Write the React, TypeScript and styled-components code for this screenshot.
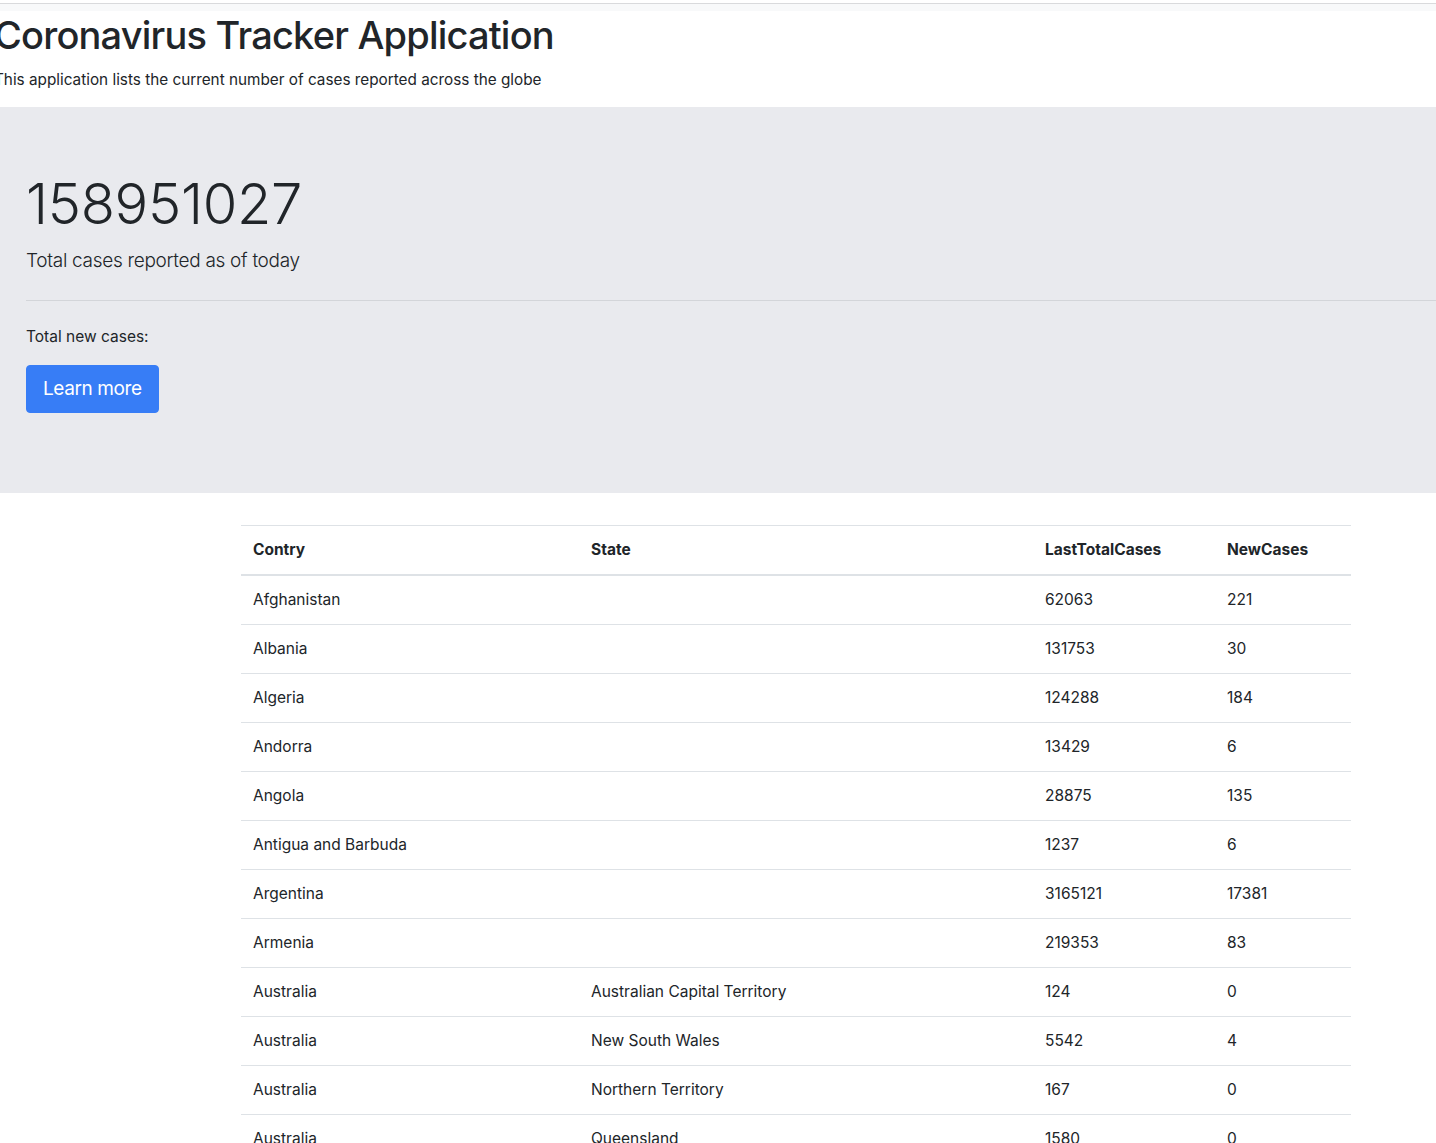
import React from 'react';
import styled, { createGlobalStyle } from 'styled-components';

const GlobalStyle = createGlobalStyle`
    html, body {
        margin: 0;
        padding: 0;
        background: #fff;
        overflow: hidden;
    }
    body {
        font-family: Inter, "Noto Sans", "Liberation Sans", sans-serif;
        font-size: 16px;
        line-height: 24px;
        color: #212529;
    }
`;

const TopStrip = styled.div`
    margin-top: 3px;
    height: 7px;
    border-top: 1px solid #d9dadc;
    background-color: #f8f9fa;
`;

const Header = styled.header`
    margin-left: -6px;
`;

const Title = styled.h1`
    margin: 0 0 8px;
    font-size: 38px;
    font-weight: 500;
    line-height: 49px;
    letter-spacing: -0.8px;
`;

const Subtitle = styled.p`
    margin: 0 0 15px;
    font-size: 15.3px;
    line-height: 24px;
`;

const Jumbotron = styled.section`
    background-color: #e9eaee;
    padding: 64px 0 64px 26px;
`;

const Display = styled.h2`
    margin: 0 0 8px;
    font-size: 56px;
    font-weight: 300;
    line-height: 67px;
    letter-spacing: -0.3px;
`;

const Lead = styled.p`
    margin: 0 0 16px;
    font-size: 19px;
    font-weight: 300;
    line-height: 30px;
    letter-spacing: -0.3px;
`;

const Divider = styled.hr`
    margin: 24px 0;
    border: 0;
    border-top: 1px solid #d3d5d9;
`;

const Text = styled.p`
    margin: 0 0 16px;
    font-size: 15.5px;
    line-height: 24px;
`;

const PrimaryButton = styled.a`
    display: inline-block;
    padding: 8px 16px;
    font-size: 19px;
    line-height: 30px;
    letter-spacing: -0.4px;
    color: #fff;
    background-color: #377df6;
    border: 1px solid #377df6;
    border-radius: 4px;
    text-decoration: none;
    cursor: pointer;
`;

const TableWrap = styled.div`
    padding: 32px 0 0 241px;
`;

const CasesTable = styled.table`
    width: 1110px;
    table-layout: fixed;
    border-collapse: collapse;
    font-size: 15.5px;
    line-height: 24px;
`;

const HeadCell = styled.th<{ $w: number }>`
    box-sizing: border-box;
    width: ${(p) => p.$w}px;
    padding: 12px;
    text-align: left;
    font-weight: 700;
    vertical-align: bottom;
    border-top: 1px solid #dee2e6;
    border-bottom: 2px solid #dee2e6;
`;

const Cell = styled.td`
    padding: 12px;
    border-top: 1px solid #dee2e6;
    vertical-align: top;
`;

type Row = { country: string; state: string; total: number; newCases: number };

const rows: Row[] = [
    { country: 'Afghanistan', state: '', total: 62063, newCases: 221 },
    { country: 'Albania', state: '', total: 131753, newCases: 30 },
    { country: 'Algeria', state: '', total: 124288, newCases: 184 },
    { country: 'Andorra', state: '', total: 13429, newCases: 6 },
    { country: 'Angola', state: '', total: 28875, newCases: 135 },
    { country: 'Antigua and Barbuda', state: '', total: 1237, newCases: 6 },
    { country: 'Argentina', state: '', total: 3165121, newCases: 17381 },
    { country: 'Armenia', state: '', total: 219353, newCases: 83 },
    { country: 'Australia', state: 'Australian Capital Territory', total: 124, newCases: 0 },
    { country: 'Australia', state: 'New South Wales', total: 5542, newCases: 4 },
    { country: 'Australia', state: 'Northern Territory', total: 167, newCases: 0 },
    { country: 'Australia', state: 'Queensland', total: 1580, newCases: 0 },
    { country: 'Australia', state: 'South Australia', total: 744, newCases: 1 },
    { country: 'Australia', state: 'Tasmania', total: 234, newCases: 0 },
];

const App: React.FC = () => {
    return (
        <>
            <GlobalStyle />
            <TopStrip />
            <Header>
                <Title>Coronavirus Tracker Application</Title>
                <Subtitle>This application lists the current number of cases reported across the globe</Subtitle>
            </Header>

            <Jumbotron>
                <Display>158951027</Display>
                <Lead>Total cases reported as of today</Lead>
                <Divider />
                <Text>Total new cases:</Text>
                <Text>
                    <PrimaryButton role="button">Learn more</PrimaryButton>
                </Text>
            </Jumbotron>

            <TableWrap>
                <CasesTable>
                    <thead>
                        <tr>
                            <HeadCell $w={338}>Contry</HeadCell>
                            <HeadCell $w={454}>State</HeadCell>
                            <HeadCell $w={182}>LastTotalCases</HeadCell>
                            <HeadCell $w={136}>NewCases</HeadCell>
                        </tr>
                    </thead>
                    <tbody>
                        {rows.map((r, i) => (
                            <tr key={i}>
                                <Cell>{r.country}</Cell>
                                <Cell>{r.state}</Cell>
                                <Cell>{r.total}</Cell>
                                <Cell>{r.newCases}</Cell>
                            </tr>
                        ))}
                    </tbody>
                </CasesTable>
            </TableWrap>
        </>
    );
};

export default App;
